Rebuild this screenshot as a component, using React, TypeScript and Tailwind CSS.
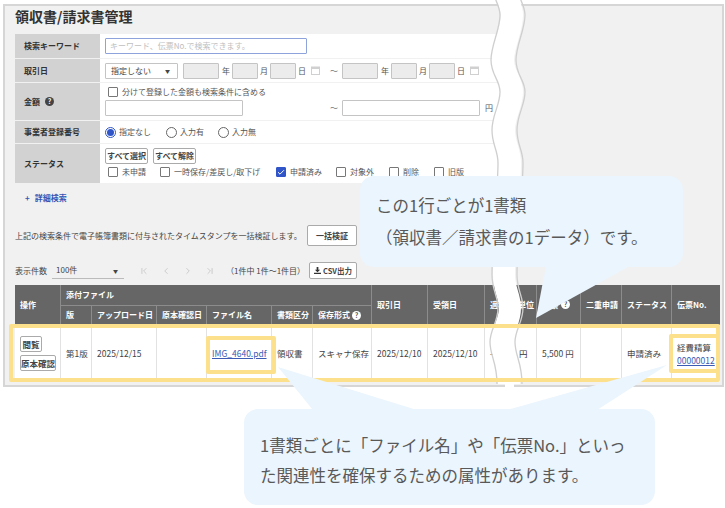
import { Check, ChevronFirst, ChevronLast, ChevronLeft, ChevronRight } from 'lucide-react';

const wave =
  'M495 -2 C498 5 500 9 500 15 C500 30 491 45 491 60 C491 75 500 80 500 92 C500 105 492 115 492 130 C492 145 498 150 498 163 C498 190 492 240 492 275 C492 290 498 296 498 308 C498 322 490 330 490 342 C490 356 497 362 497 384';

function Help({ dark }: { dark?: boolean }) {
  return (
    <span
      className={`inline-flex h-[9px] w-[9px] items-center justify-center rounded-full text-[7px] leading-none font-bold ${
        dark ? 'bg-[#444] text-white' : 'bg-white text-[#555]'
      }`}
    >
      ?
    </span>
  );
}

function CheckBox({ label, checked, className }: { label: string; checked?: boolean; className?: string }) {
  return (
    <span className={`flex items-center gap-[4px] text-[#555] ${className ?? ''}`}>
      <span
        className={`flex h-[10px] w-[10px] items-center justify-center rounded-[1px] border ${
          checked ? 'border-[#2f55c8] bg-[#2f55c8]' : 'border-[#777] bg-white'
        }`}
      >
        {checked && <Check className="h-[9px] w-[9px] text-white" strokeWidth={3} />}
      </span>
      {label}
    </span>
  );
}

function Radio({ label, checked, className }: { label: string; checked?: boolean; className?: string }) {
  return (
    <span className={`flex items-center gap-[3px] text-[#555] ${className ?? ''}`}>
      <span
        className={`flex h-[11px] w-[11px] items-center justify-center rounded-full border ${
          checked ? 'border-[#2f55c8]' : 'border-[#666]'
        }`}
      >
        {checked && <span className="h-[7px] w-[7px] rounded-full bg-[#2f55c8]" />}
      </span>
      {label}
    </span>
  );
}

function Cal({ className }: { className?: string }) {
  return (
    <svg viewBox="0 0 9 9" className={`h-[9px] w-[9px] ${className ?? ''}`}>
      <rect x="0.5" y="1" width="8" height="7.5" fill="none" stroke="#d0d0d0" />
      <rect x="0.5" y="1" width="8" height="2" fill="#d0d0d0" />
    </svg>
  );
}

function DateRange({ startClass }: { startClass: string }) {
  return (
    <>
      <span className={`h-[16px] w-[36px] rounded-[1px] border border-[#c4c4c4] bg-[#ececec] ${startClass}`} />
      <span className="ml-[3px] w-[9px] text-[#555]">年</span>
      <span className="ml-[1px] h-[16px] w-[26px] rounded-[1px] border border-[#c4c4c4] bg-[#ececec]" />
      <span className="ml-[2px] w-[9px] text-[#555]">月</span>
      <span className="ml-[1px] h-[16px] w-[26px] rounded-[1px] border border-[#c4c4c4] bg-[#ececec]" />
      <span className="ml-[2px] w-[9px] text-[#555]">日</span>
      <Cal className="ml-[4px]" />
    </>
  );
}

function FormRow({ label, height, help, children }: { label: string; height: string; help?: boolean; children: React.ReactNode }) {
  return (
    <div className={`flex ${height}`}>
      <div className="flex w-[85px] items-center gap-[5px] bg-[#d2d2d2] pl-[9px] font-bold text-[#333]">
        {label}
        {help && <Help dark />}
      </div>
      <div className="flex-1 bg-white pl-[5px]">{children}</div>
    </div>
  );
}

function SmallBtn({ children, className }: { children: React.ReactNode; className?: string }) {
  return (
    <span
      className={`flex items-center justify-center rounded-[2px] border border-[#aaa] bg-white font-bold text-[#444] ${className ?? ''}`}
    >
      {children}
    </span>
  );
}

const th = 'flex items-center overflow-hidden whitespace-nowrap border-r border-b border-[#8c8c8c] bg-[#666] pl-[5px] font-bold text-white';
const td = 'flex items-center overflow-hidden whitespace-nowrap border-r border-[#e2e2e2] bg-white pl-[5px] text-[8.5px] text-[#444]';

export default function App() {
  return (
    <div className="relative h-[508px] w-[725px] overflow-hidden bg-white font-['Noto_Sans_CJK_JP',sans-serif] text-[8px] leading-none">
      <div className="mt-[4px] ml-[3px] h-[383px] w-[721px] border-2 border-[#d6d6d6] bg-[#f1f1f1] pl-[10px]">
        <h1 className="mb-[7px] h-[21px] text-[14px] leading-[20px] font-bold text-[#333]">領収書/請求書管理</h1>

        <div className="flex w-[495px] flex-col gap-px">
          <FormRow label="検索キーワード" height="h-[24px]">
            <div className="flex h-full items-center">
              <span className="flex h-[16px] w-[202px] items-center rounded-[1px] border border-[#8ea3dc] pl-[4px] text-[#c0c0c0]">
                キーワード、伝票No.で検索できます。
              </span>
            </div>
          </FormRow>
          <FormRow label="取引日" height="h-[23px]">
            <div className="flex h-full items-center">
              <span className="flex h-[16px] w-[73px] items-center justify-between rounded-[1px] border border-[#c4c4c4] pr-[7px] pl-[5px] text-[#444]">
                指定しない<span className="text-[5px]">▼</span>
              </span>
              <DateRange startClass="ml-[5px]" />
              <span className="ml-[10px] w-[8px] text-[#777]">～</span>
              <DateRange startClass="ml-[4px]" />
            </div>
          </FormRow>
          <FormRow label="金額" height="h-[37px]" help>
            <CheckBox label="分けて登録した金額も検索条件に含める" className="mt-[4px] ml-[3px] h-[10px]" />
            <div className="mt-[3px] flex items-center">
              <span className="h-[16px] w-[138px] rounded-[1px] border border-[#c4c4c4]" />
              <span className="ml-[87px] w-[12px] text-[#777]">～</span>
              <span className="h-[16px] w-[138px] rounded-[1px] border border-[#c4c4c4]" />
              <span className="ml-[5px] text-[#555]">円</span>
            </div>
          </FormRow>
          <FormRow label="事業者登録番号" height="h-[22px]">
            <div className="flex h-full items-center">
              <Radio label="指定なし" checked className="w-[61px]" />
              <Radio label="入力有" className="w-[52px]" />
              <Radio label="入力無" />
            </div>
          </FormRow>
          <FormRow label="ステータス" height="h-[39px]">
            <div className="flex gap-[5px] pt-[4px]">
              <SmallBtn className="h-[16px] w-[43px]">すべて選択</SmallBtn>
              <SmallBtn className="h-[16px] w-[43px]">すべて解除</SmallBtn>
            </div>
            <div className="mt-[3px] ml-[3px] flex items-center">
              <CheckBox label="未申請" className="w-[52px]" />
              <CheckBox label="一時保存/差戻し/取下げ" className="w-[116px]" />
              <CheckBox label="申請済み" checked className="w-[60px]" />
              <CheckBox label="対象外" className="w-[53px]" />
              <CheckBox label="削除" className="w-[45px]" />
              <CheckBox label="旧版" />
            </div>
          </FormRow>
        </div>

        <div className="mt-[11px] ml-[10px] flex h-[10px] gap-[5px] font-bold text-[#3757b5]">
          <span>+</span>
          <span>詳細検索</span>
        </div>

        <div className="mt-[21px] flex h-[21px] items-center">
          <span className="w-[292px] whitespace-nowrap text-[#444]">
            上記の検索条件で電子帳簿書類に付与されたタイムスタンプを一括検証します。
          </span>
          <SmallBtn className="h-[21px] w-[50px]">一括検証</SmallBtn>
        </div>

        <div className="mt-[16px] flex h-[17px] items-center">
          <span className="w-[37px] text-[#444]">表示件数</span>
          <span className="flex h-[17px] w-[72px] items-center justify-between border-b border-[#bbb] pr-[6px] pl-[4px] text-[#444]">
            100件<span className="text-[5px]">▼</span>
          </span>
          <span className="ml-[9px] flex w-[88px] text-[#c4c4c4]">
            <ChevronFirst className="h-[10px] w-[22px]" />
            <ChevronLeft className="h-[10px] w-[22px]" />
            <ChevronRight className="h-[10px] w-[22px]" />
            <ChevronLast className="h-[10px] w-[22px]" />
          </span>
          <span className="ml-[5px] w-[83px] whitespace-nowrap text-[#444]">（1件中 1件～1件目）</span>
          <SmallBtn className="h-[17px] w-[48px] gap-[2px] text-[7.5px]">
            <svg viewBox="0 0 8 8" className="h-[7px] w-[7px]">
              <path d="M3 0h2v3h2L4 6 1 3h2zM0 6.5h8V8H0z" fill="#333" />
            </svg>
            CSV出力
          </SmallBtn>
        </div>

        <div className="mt-[6px] grid w-[705px] grid-cols-[46px_31px_65px_50px_65px_41px_59px_56px_57px_28px_24px_44px_41px_50px_48px] grid-rows-[21px_19px_57px]">
          <div className={`${th} row-span-2`}>操作</div>
          <div className={`${th} col-span-6`}>添付ファイル</div>
          <div className={`${th} row-span-2`}>取引日</div>
          <div className={`${th} row-span-2`}>受領日</div>
          <div className={`${th} row-span-2`}>適格</div>
          <div className={`${th} row-span-2`}>単位</div>
          <div className={`${th} row-span-2 gap-[3px]`}>金額<Help /></div>
          <div className={`${th} row-span-2`}>二重申請</div>
          <div className={`${th} row-span-2`}>ステータス</div>
          <div className={`${th} row-span-2 border-r-0`}>伝票No.</div>
          <div className={th}>版</div>
          <div className={th}>アップロード日</div>
          <div className={th}>原本確認日</div>
          <div className={th}>ファイル名</div>
          <div className={th}>書類区分</div>
          <div className={`${th} gap-[2px]`}>保存形式<Help /></div>

          <div className={`${td} flex-col items-start justify-center gap-[3px]`}>
            <SmallBtn className="h-[16px] w-[22px]">閲覧</SmallBtn>
            <SmallBtn className="h-[16px] w-[36px]">原本確認</SmallBtn>
          </div>
          <div className={td}>第1版</div>
          <div className={td}>2025/12/15</div>
          <div className={td} />
          <div className={td}><span className="text-[#3b5bb5] underline">IMG_4640.pdf</span></div>
          <div className={td}>領収書</div>
          <div className={td}>スキャナ保存</div>
          <div className={td}>2025/12/10</div>
          <div className={td}>2025/12/10</div>
          <div className={td}>-</div>
          <div className={td}><span className="ml-[1px] text-[#333]">円</span></div>
          <div className={td}>5,500 円</div>
          <div className={td} />
          <div className={td}>申請済み</div>
          <div className={`${td} flex-col items-start justify-center gap-[4px] border-r-0`}>
            <span>経費精算</span>
            <span className="text-[#3b5bb5] underline">00000012</span>
          </div>
        </div>
      </div>

      <svg className="absolute top-0 left-0 h-[508px] w-[725px]" viewBox="0 0 725 508" fill="none">
        <path d={wave} stroke="#fff" strokeWidth="22" transform="translate(12 0)" />
        <path d={wave} stroke="#cfcfcf" strokeWidth="1.3" />
        <path d={wave} stroke="#cfcfcf" strokeWidth="1.3" transform="translate(25 0)" />
        <rect x="505" y="384" width="9" height="4" fill="#fff" />
      </svg>

      <div className="absolute top-[324px] left-[9px] h-[58px] w-[711px] rounded-[2px] border-4 border-[#fde08b]" />
      <div className="absolute top-[336px] left-[206px] h-[38px] w-[70px] rounded-[2px] border-4 border-[#fde08b]" />
      <div className="absolute top-[334px] left-[669px] h-[39px] w-[51px] rounded-[2px] border-4 border-[#fde08b]" />

      <svg className="absolute top-0 left-0 h-[508px] w-[725px]" viewBox="0 0 725 508">
        <polygon points="546,266 630,266 536,318" fill="#ebf5fd" />
        <polygon points="278,367 313,410 417,410" fill="#ebf5fd" />
        <polygon points="667,365 507,410 597,410" fill="#ebf5fd" />
      </svg>

      <div className="absolute top-[176px] left-[360px] h-[91px] w-[323px] rounded-[14px] bg-[#ebf5fd] pt-[13px] pl-[16px] text-[16.5px] leading-[32px] whitespace-nowrap text-[#595959]">
        この1行ごとが1書類
        <br />
        （領収書／請求書の1データ）です。
      </div>
      <div className="absolute top-[409px] left-[244px] h-[96px] w-[411px] rounded-[14px] bg-[#ebf5fd] pt-[21px] pl-[16px] text-[16.5px] leading-[30px] whitespace-nowrap text-[#595959]">
        1書類ごとに「ファイル名」や「伝票No.」といっ
        <br />
        た関連性を確保するための属性があります。
      </div>
    </div>
  );
}
